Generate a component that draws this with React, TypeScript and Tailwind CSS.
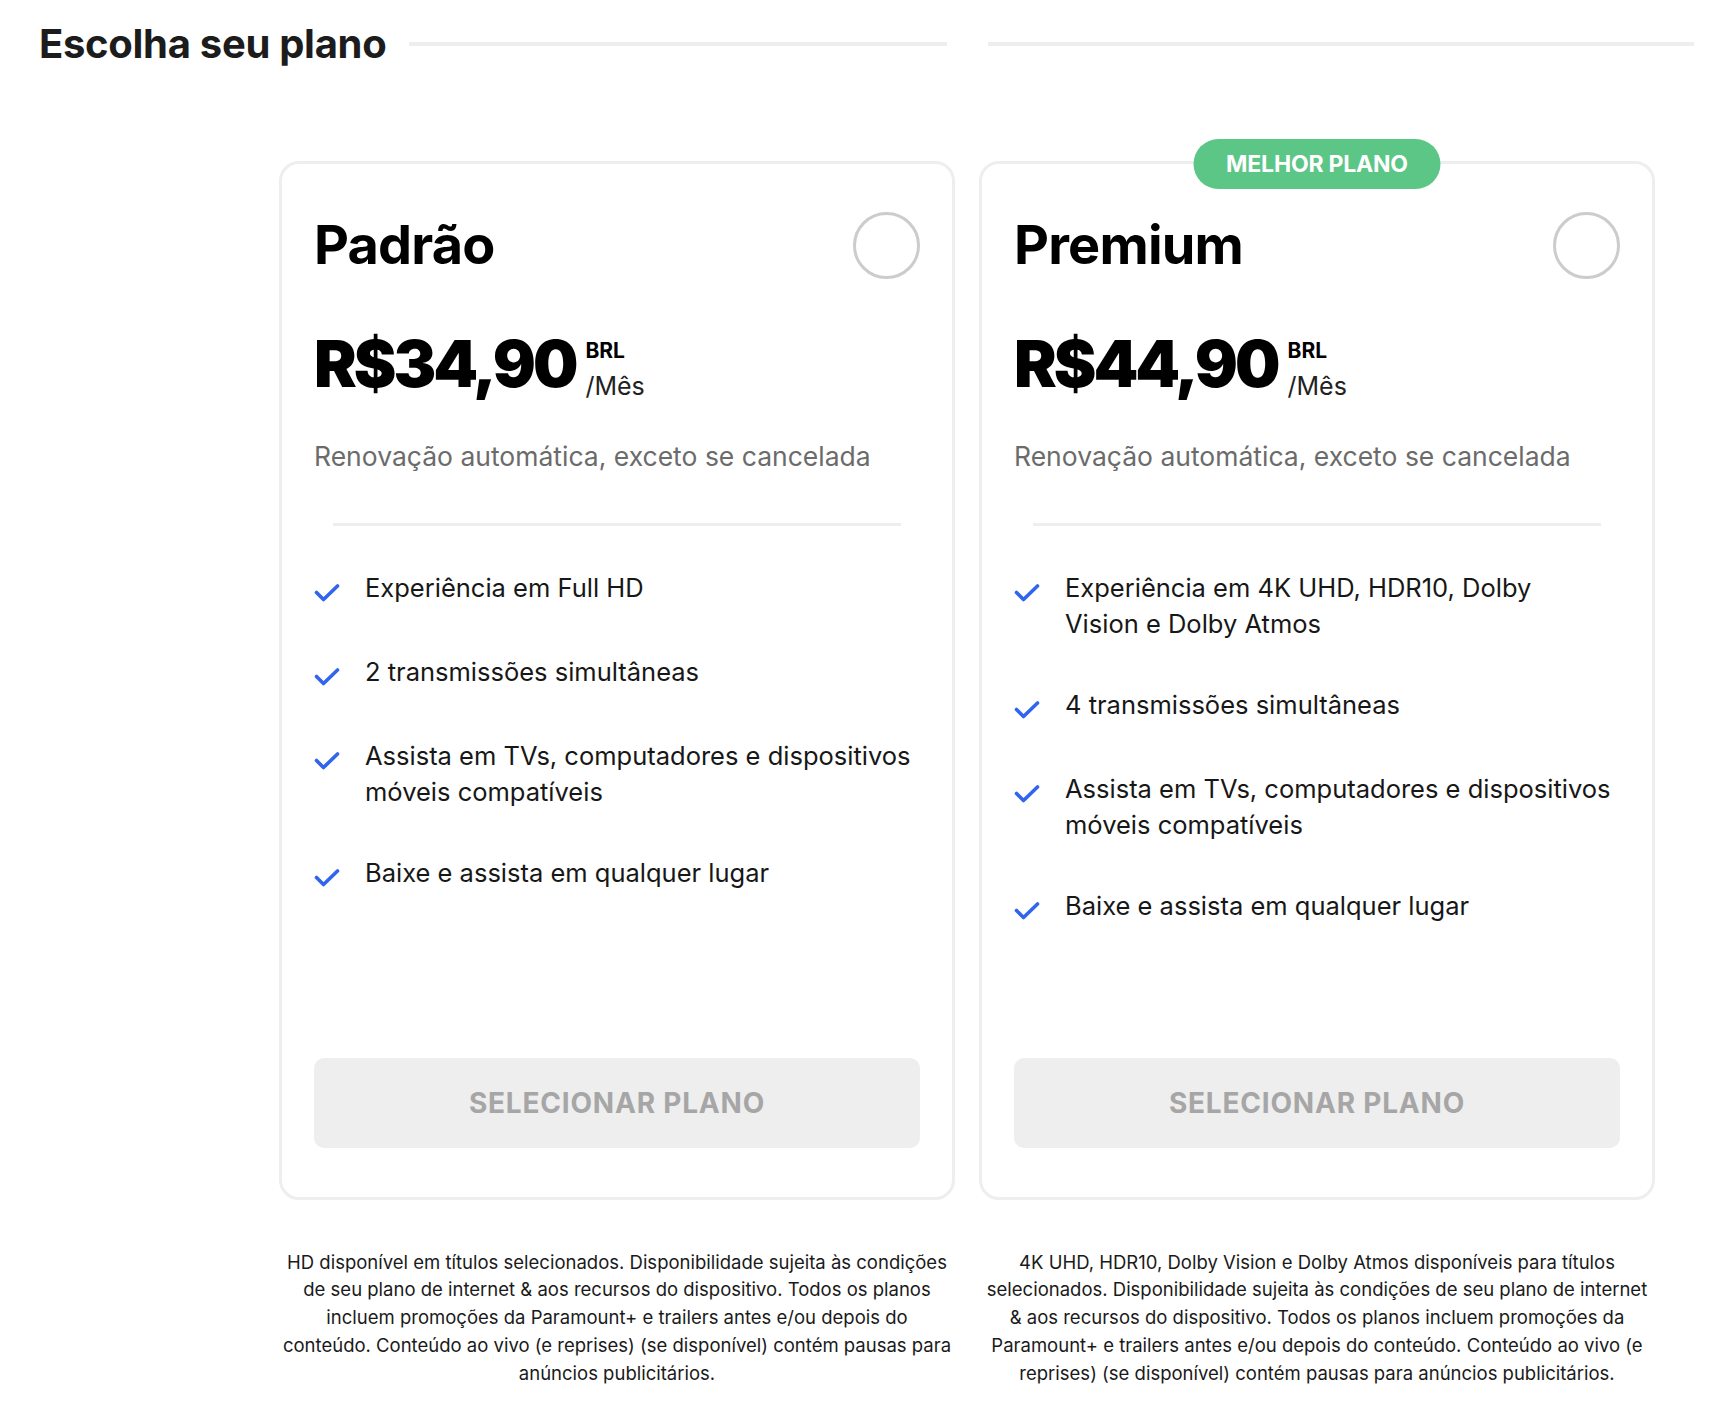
import React from "react";

type Plan = {
  name: string;
  price: string;
  badge?: string;
  features: string[];
  disclaimer: string[];
};

// quebras de linha fixas para ficar igual ao layout original
const plans: Plan[] = [
  {
    name: "Padrão",
    price: "R$34,90",
    features: [
      "Experiência em Full HD",
      "2 transmissões simultâneas",
      "Assista em TVs, computadores e dispositivos\nmóveis compatíveis",
      "Baixe e assista em qualquer lugar",
    ],
    disclaimer: [
      "HD disponível em títulos selecionados. Disponibilidade sujeita às condições",
      "de seu plano de internet & aos recursos do dispositivo. Todos os planos",
      "incluem promoções da Paramount+ e trailers antes e/ou depois do",
      "conteúdo. Conteúdo ao vivo (e reprises) (se disponível) contém pausas para",
      "anúncios publicitários.",
    ],
  },
  {
    name: "Premium",
    price: "R$44,90",
    badge: "MELHOR PLANO",
    features: [
      "Experiência em 4K UHD, HDR10, Dolby\nVision e Dolby Atmos",
      "4 transmissões simultâneas",
      "Assista em TVs, computadores e dispositivos\nmóveis compatíveis",
      "Baixe e assista em qualquer lugar",
    ],
    disclaimer: [
      "4K UHD, HDR10, Dolby Vision e Dolby Atmos disponíveis para títulos",
      "selecionados. Disponibilidade sujeita às condições de seu plano de internet",
      "& aos recursos do dispositivo. Todos os planos incluem promoções da",
      "Paramount+ e trailers antes e/ou depois do conteúdo. Conteúdo ao vivo (e",
      "reprises) (se disponível) contém pausas para anúncios publicitários.",
    ],
  },
];

const CheckIcon = () => (
  <svg width="26" height="18" viewBox="0 0 26 18" fill="none" className="shrink-0 mt-[14px] mb-[7px]">
    <path
      d="M2.5 8.5 L9.5 15.5 L23.5 2"
      stroke="#3165ee"
      strokeWidth="3.6"
      strokeLinecap="round"
      strokeLinejoin="round"
    />
  </svg>
);

const PlanCard: React.FC<{ plan: Plan }> = ({ plan }) => (
  <div className="relative flex flex-col border-[3px] border-[#eeeeee] rounded-[20px] bg-white px-[32px] pt-[47px] pb-[49px]">
    {/* Badge */}
    {plan.badge && (
      <div className="absolute left-1/2 -translate-x-1/2 top-[-25px] h-[50px] w-[247px] rounded-full bg-[#5bc686] flex items-center justify-center">
        <span className="text-white text-[23px] font-bold leading-none tracking-[-0.2px]">
          {plan.badge}
        </span>
      </div>
    )}

    {/* Header */}
    <div className="flex items-center justify-between h-[68px]">
      <h2 className="text-[54px] font-bold leading-none text-black tracking-[-0.8px]">
        {plan.name}
      </h2>
      <div className="w-[67px] h-[67px] rounded-full border-[3px] border-[#cccccc]" />
    </div>

    {/* Price */}
    <div className="flex items-start gap-[10px] mt-[53px] h-[64px]">
      <span className="text-[64px] font-black leading-none text-black tracking-[-3px]">
        {plan.price}
      </span>
      <div className="flex flex-col gap-[13px] mt-[8px]">
        <span className="text-[21px] font-bold leading-none text-black">BRL</span>
        <span className="text-[25px] leading-none text-[#222]">/Mês</span>
      </div>
    </div>

    <p className="mt-[47px] text-[26.5px] leading-none text-[#6b6b6b]">
      Renovação automática, exceto se cancelada
    </p>

    <div className="mx-[19px] mt-[53px] h-[3px] bg-[#eeeeee]" />

    {/* Features */}
    <ul className="mt-[44px] mb-[131px] flex flex-col gap-[45px]">
      {plan.features.map((f) => (
        <li key={f} className="flex items-start gap-[25px]">
          <CheckIcon />
          <span className="text-[25.5px] leading-[36px] text-[#171717] whitespace-pre-line">{f}</span>
        </li>
      ))}
    </ul>

    {/* Action */}
    <button className="mt-auto h-[90px] w-full rounded-[10px] bg-[#eeeeee] text-[28px] font-bold text-[#a6a6a6] tracking-[0.8px]">
      SELECIONAR PLANO
    </button>
  </div>
);

export default function App() {
  return (
    <div
      className="min-h-[1412px] w-full bg-white pl-[39px] pr-[16px] pt-[20px] text-[#171717]"
      style={{ fontFamily: "Inter, 'Noto Sans', sans-serif" }}
    >
      {/* Title row */}
      <div className="flex items-center h-[48px]">
        <h1 className="text-[40px] font-bold leading-none text-[#1c1c1c] tracking-[-0.3px] shrink-0">
          Escolha seu plano
        </h1>
        <div className="ml-[23px] h-[4px] bg-[#eeeeee] w-[538px]" />
        <div className="ml-[41px] h-[4px] bg-[#eeeeee] flex-1" />
      </div>

      {/* Cards */}
      <div className="ml-[240px] mt-[93px] grid grid-cols-[676px_676px] gap-x-[24px]">
        {plans.map((p) => (
          <PlanCard key={p.name} plan={p} />
        ))}
        {plans.map((p) => (
          <p
            key={p.name + "-d"}
            className="mt-[49px] text-center text-[18.5px] leading-[27.8px] text-[#1a1a1a] whitespace-nowrap"
          >
            {p.disclaimer.map((line, i) => (
              <React.Fragment key={i}>
                {line}
                {i < p.disclaimer.length - 1 && <br />}
              </React.Fragment>
            ))}
          </p>
        ))}
      </div>
    </div>
  );
}
